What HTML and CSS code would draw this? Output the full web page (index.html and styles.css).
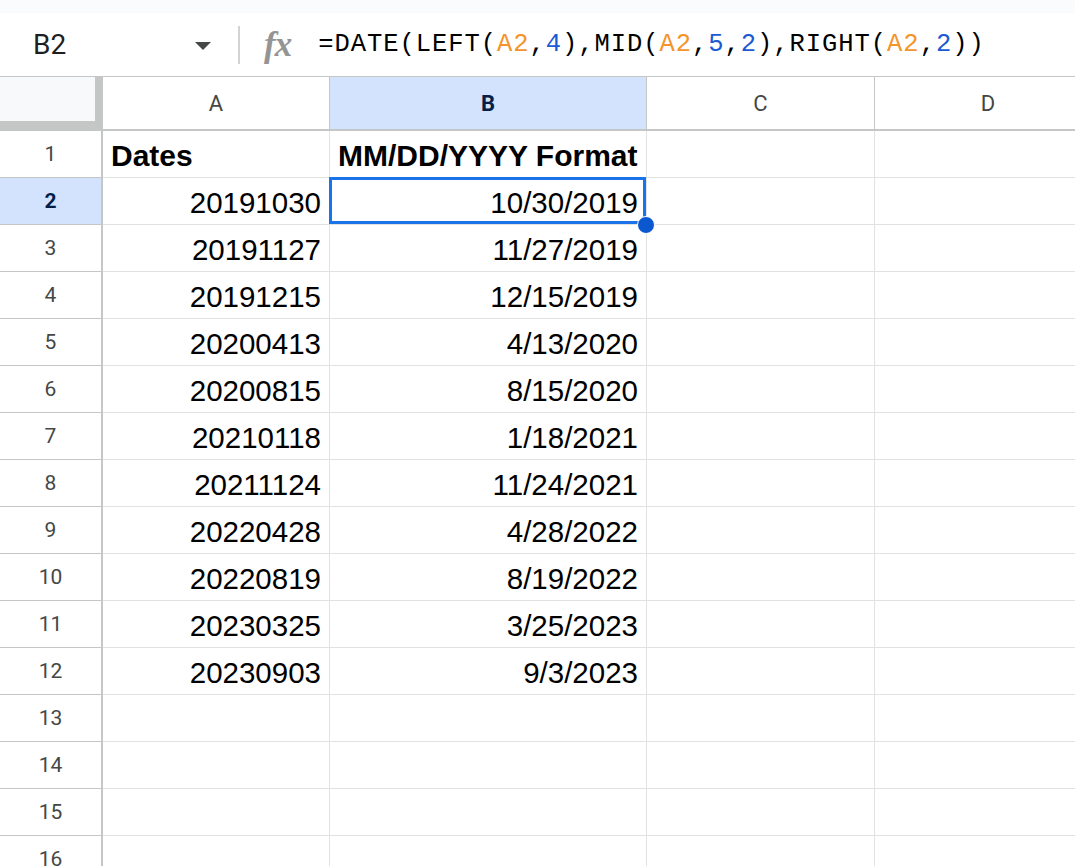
FILE: index.html
```html
<!DOCTYPE html>
<html lang="en">

<head>
  <meta charset="UTF-8">
  <meta name="viewport" content="width=device-width, initial-scale=1">
  <title>sheet - date format</title>
  <link rel="stylesheet" href="styles.css">
</head>

<body>
  <div class="top-strip"></div>

  <div class="formula-bar">
    <div class="name-box">
      <span class="cell-ref">B2</span>
      <svg class="caret" width="16" height="8" viewBox="0 0 16 8">
        <path d="M0 0 L16 0 L8 8 Z" fill="#444746" />
      </svg>
    </div>
    <div class="divider"></div>
    <span class="fx">fx</span>
    <div class="formula">=DATE(LEFT(<span class="ref">A2</span>,<span class="num">4</span>),MID(<span class="ref">A2</span>,<span class="num">5</span>,<span class="num">2</span>),RIGHT(<span class="ref">A2</span>,<span class="num">2</span>))</div>
  </div>

  <div class="sheet">
    <!-- column headers -->
    <div class="corner"></div>
    <div class="col-head">A</div>
    <div class="col-head active">B</div>
    <div class="col-head">C</div>
    <div class="col-head">D</div>

    <div class="row-head">1</div>
    <div class="cell bold">Dates</div>
    <div class="cell bold">MM/DD/YYYY Format</div>
    <div class="cell"></div>
    <div class="cell"></div>

    <div class="row-head active">2</div>
    <div class="cell num-cell">20191030</div>
    <div class="cell num-cell selected">10/30/2019<span class="handle"></span></div>
    <div class="cell"></div>
    <div class="cell"></div>

    <div class="row-head">3</div>
    <div class="cell num-cell">20191127</div>
    <div class="cell num-cell">11/27/2019</div>
    <div class="cell"></div>
    <div class="cell"></div>

    <div class="row-head">4</div>
    <div class="cell num-cell">20191215</div>
    <div class="cell num-cell">12/15/2019</div>
    <div class="cell"></div>
    <div class="cell"></div>

    <div class="row-head">5</div>
    <div class="cell num-cell">20200413</div>
    <div class="cell num-cell">4/13/2020</div>
    <div class="cell"></div>
    <div class="cell"></div>

    <div class="row-head">6</div>
    <div class="cell num-cell">20200815</div>
    <div class="cell num-cell">8/15/2020</div>
    <div class="cell"></div>
    <div class="cell"></div>

    <div class="row-head">7</div>
    <div class="cell num-cell">20210118</div>
    <div class="cell num-cell">1/18/2021</div>
    <div class="cell"></div>
    <div class="cell"></div>

    <div class="row-head">8</div>
    <div class="cell num-cell">20211124</div>
    <div class="cell num-cell">11/24/2021</div>
    <div class="cell"></div>
    <div class="cell"></div>

    <div class="row-head">9</div>
    <div class="cell num-cell">20220428</div>
    <div class="cell num-cell">4/28/2022</div>
    <div class="cell"></div>
    <div class="cell"></div>

    <div class="row-head">10</div>
    <div class="cell num-cell">20220819</div>
    <div class="cell num-cell">8/19/2022</div>
    <div class="cell"></div>
    <div class="cell"></div>

    <div class="row-head">11</div>
    <div class="cell num-cell">20230325</div>
    <div class="cell num-cell">3/25/2023</div>
    <div class="cell"></div>
    <div class="cell"></div>

    <div class="row-head">12</div>
    <div class="cell num-cell">20230903</div>
    <div class="cell num-cell">9/3/2023</div>
    <div class="cell"></div>
    <div class="cell"></div>

    <div class="row-head">13</div>
    <div class="cell"></div>
    <div class="cell"></div>
    <div class="cell"></div>
    <div class="cell"></div>

    <div class="row-head">14</div>
    <div class="cell"></div>
    <div class="cell"></div>
    <div class="cell"></div>
    <div class="cell"></div>

    <div class="row-head">15</div>
    <div class="cell"></div>
    <div class="cell"></div>
    <div class="cell"></div>
    <div class="cell"></div>

    <div class="row-head">16</div>
    <div class="cell"></div>
    <div class="cell"></div>
    <div class="cell"></div>
    <div class="cell"></div>
  </div>
</body>

</html>
```

FILE: styles.css
```css
body {
  margin: 0;
  background: #fff;
  color: #000;
  font-family: Roboto, 'Liberation Sans', Arial, sans-serif;
  overflow: hidden;
}

.top-strip {
  height: 13px;
  background: #f9fbfd;
}

/* name box + formula */
.formula-bar {
  display: flex;
  align-items: center;
  height: 63px;
  padding-left: 33px;
  border-bottom: 1px solid #c4c7c5;
  background: #fff;
}

.name-box {
  display: flex;
  align-items: center;
  justify-content: space-between;
  width: 178px;
}

.cell-ref {
  font-size: 28px;
  color: #1f1f1f;
}

.caret {
  display: block;
  margin-top: 2px;
}

.divider {
  width: 2px;
  height: 38px;
  margin-left: 27px;
  background: #d3d3d3;
}

.fx {
  margin-left: 24px;
  font-family: 'Liberation Serif', 'Times New Roman', serif;
  font-style: italic;
  font-weight: bold;
  font-size: 35px;
  line-height: 1;
  color: #949494;
  letter-spacing: -1px;
}

.formula {
  margin-left: 27px;
  font-family: 'Liberation Mono', 'DejaVu Sans Mono', monospace;
  font-size: 25.5px;
  letter-spacing: 0.95px;
  color: #000;
  white-space: nowrap;
}

.formula .ref {
  color: #f4942a;
}

.formula .num {
  color: #1c5ad4;
}

/* grid */
.sheet {
  display: grid;
  grid-template-columns: 103px 227px 317px 228px 227px;
  grid-template-rows: 54px;
  grid-auto-rows: 47px;
  width: 1102px;
}

.corner {
  box-sizing: border-box;
  background: #f8f9fa;
  border-right: 8px solid #c4c7c5;
  border-bottom: 10px solid #c4c7c5;
}

.col-head {
  box-sizing: border-box;
  display: flex;
  align-items: center;
  justify-content: center;
  border-right: 1px solid #c4c7c5;
  border-bottom: 2px solid #c4c7c5;
  font-size: 22px;
  color: #444746;
}

.row-head {
  box-sizing: border-box;
  display: flex;
  align-items: center;
  justify-content: center;
  border-right: 2px solid #c4c7c5;
  border-bottom: 1px solid #c4c7c5;
  font-size: 21px;
  color: #444746;
}

.col-head.active,
.row-head.active {
  background: #d3e3fd;
  color: #041e49;
  font-weight: bold;
}

.cell {
  box-sizing: border-box;
  display: flex;
  align-items: center;
  padding: 3px 8px 0;
  border-right: 1px solid #e1e3e1;
  border-bottom: 1px solid #e1e3e1;
  font-family: 'Liberation Sans', Arial, sans-serif;
  font-size: 29.5px;
  white-space: nowrap;
}

.cell.bold {
  font-weight: bold;
  font-size: 30px;
}

.cell.num-cell {
  justify-content: flex-end;
}

/* active cell outline */
.cell.selected {
  position: relative;
}

.cell.selected::after {
  content: '';
  position: absolute;
  top: -1px;
  left: -1px;
  right: 0;
  bottom: 0;
  border: 3px solid #1a73e8;
  z-index: 2;
}

.handle {
  position: absolute;
  right: -9px;
  bottom: -10px;
  width: 16px;
  height: 16px;
  border: 1.5px solid #fff;
  border-radius: 50%;
  background: #0b57d0;
  z-index: 3;
}
```
